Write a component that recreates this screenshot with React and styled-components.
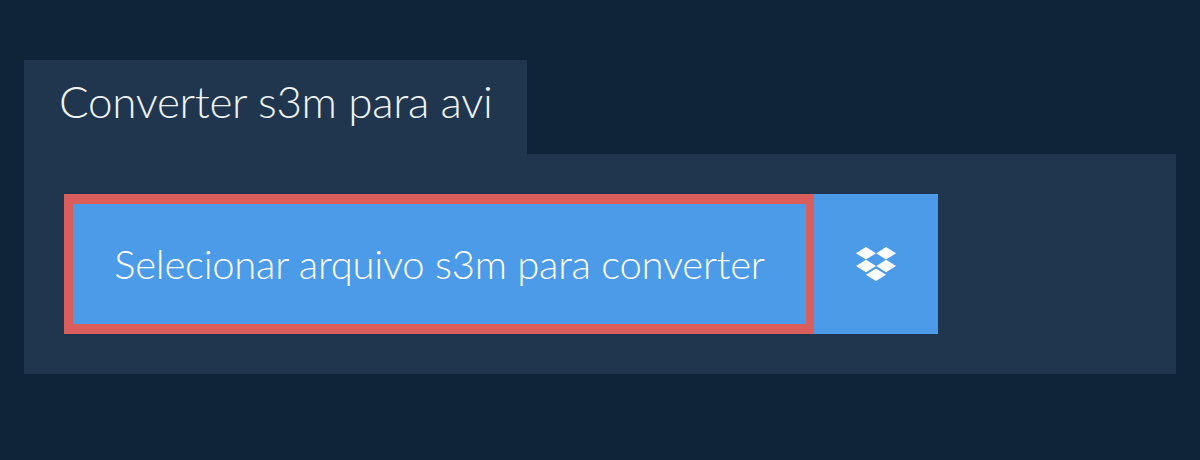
import React from "react";
import styled, { createGlobalStyle } from "styled-components";

const Global = createGlobalStyle`
  html, body { margin: 0; padding: 0; background: #0f2439; }
  body { font-family: Lato, "Liberation Sans", sans-serif; }
`;

const Page = styled.div`
  width: 1200px;
  height: 460px;
  box-sizing: border-box;
  padding: 60px 24px 0;
  background: #0f2439;
  overflow: hidden;
`;

const Tab = styled.h1`
  display: block;
  width: 503px;
  box-sizing: border-box;
  height: 94px;
  margin: 0;
  padding: 14px 0 0 35px;
  background: #20364e;
  color: #f0f3f5;
  font-size: 44px;
  font-weight: 300;
  line-height: 54px;
  letter-spacing: -0.32px;
  white-space: nowrap;
`;

const Panel = styled.section`
  display: flex;
  box-sizing: border-box;
  height: 220px;
  padding: 40px;
  background: #20364e;
`;

const SelectButton = styled.button`
  box-sizing: border-box;
  width: 750px;
  height: 140px;
  padding: 0;
  border-style: solid;
  border-color: #da5f5c;
  border-width: 10px 8px 10px 9px;
  background: #4c9be8;
  color: #fff;
  font-family: inherit;
  font-size: 40px;
  font-weight: 300;
  letter-spacing: -0.25px;
  white-space: nowrap;
`;

const DropboxButton = styled.button`
  display: flex;
  align-items: center;
  justify-content: center;
  width: 124px;
  height: 140px;
  padding: 0;
  border: 0;
  background: #4c9be8;
  color: #fff;
`;

const DropboxIcon = () => (
  <svg width="40" height="34" viewBox="0 0 40 34" fill="currentColor" aria-hidden="true">
    <polygon points="0,6.3 10,0 20,6.3 10,12.6" />
    <polygon points="20.4,6.3 30,0 40,6.3 30,12.6" />
    <polygon points="0,19 10,12.8 20,19 10,25.2" />
    <polygon points="20.4,19 30,12.8 40,19 30,25.2" />
    <polygon points="10,27.7 20,21.4 30,27.7 20,34" />
  </svg>
);

export default function App() {
  return (
    <Page>
      <Global />
      <Tab>Converter s3m para avi</Tab>
      <Panel>
        <SelectButton>Selecionar arquivo s3m para converter</SelectButton>
        <DropboxButton aria-label="Dropbox">
          <DropboxIcon />
        </DropboxButton>
      </Panel>
    </Page>
  );
}
